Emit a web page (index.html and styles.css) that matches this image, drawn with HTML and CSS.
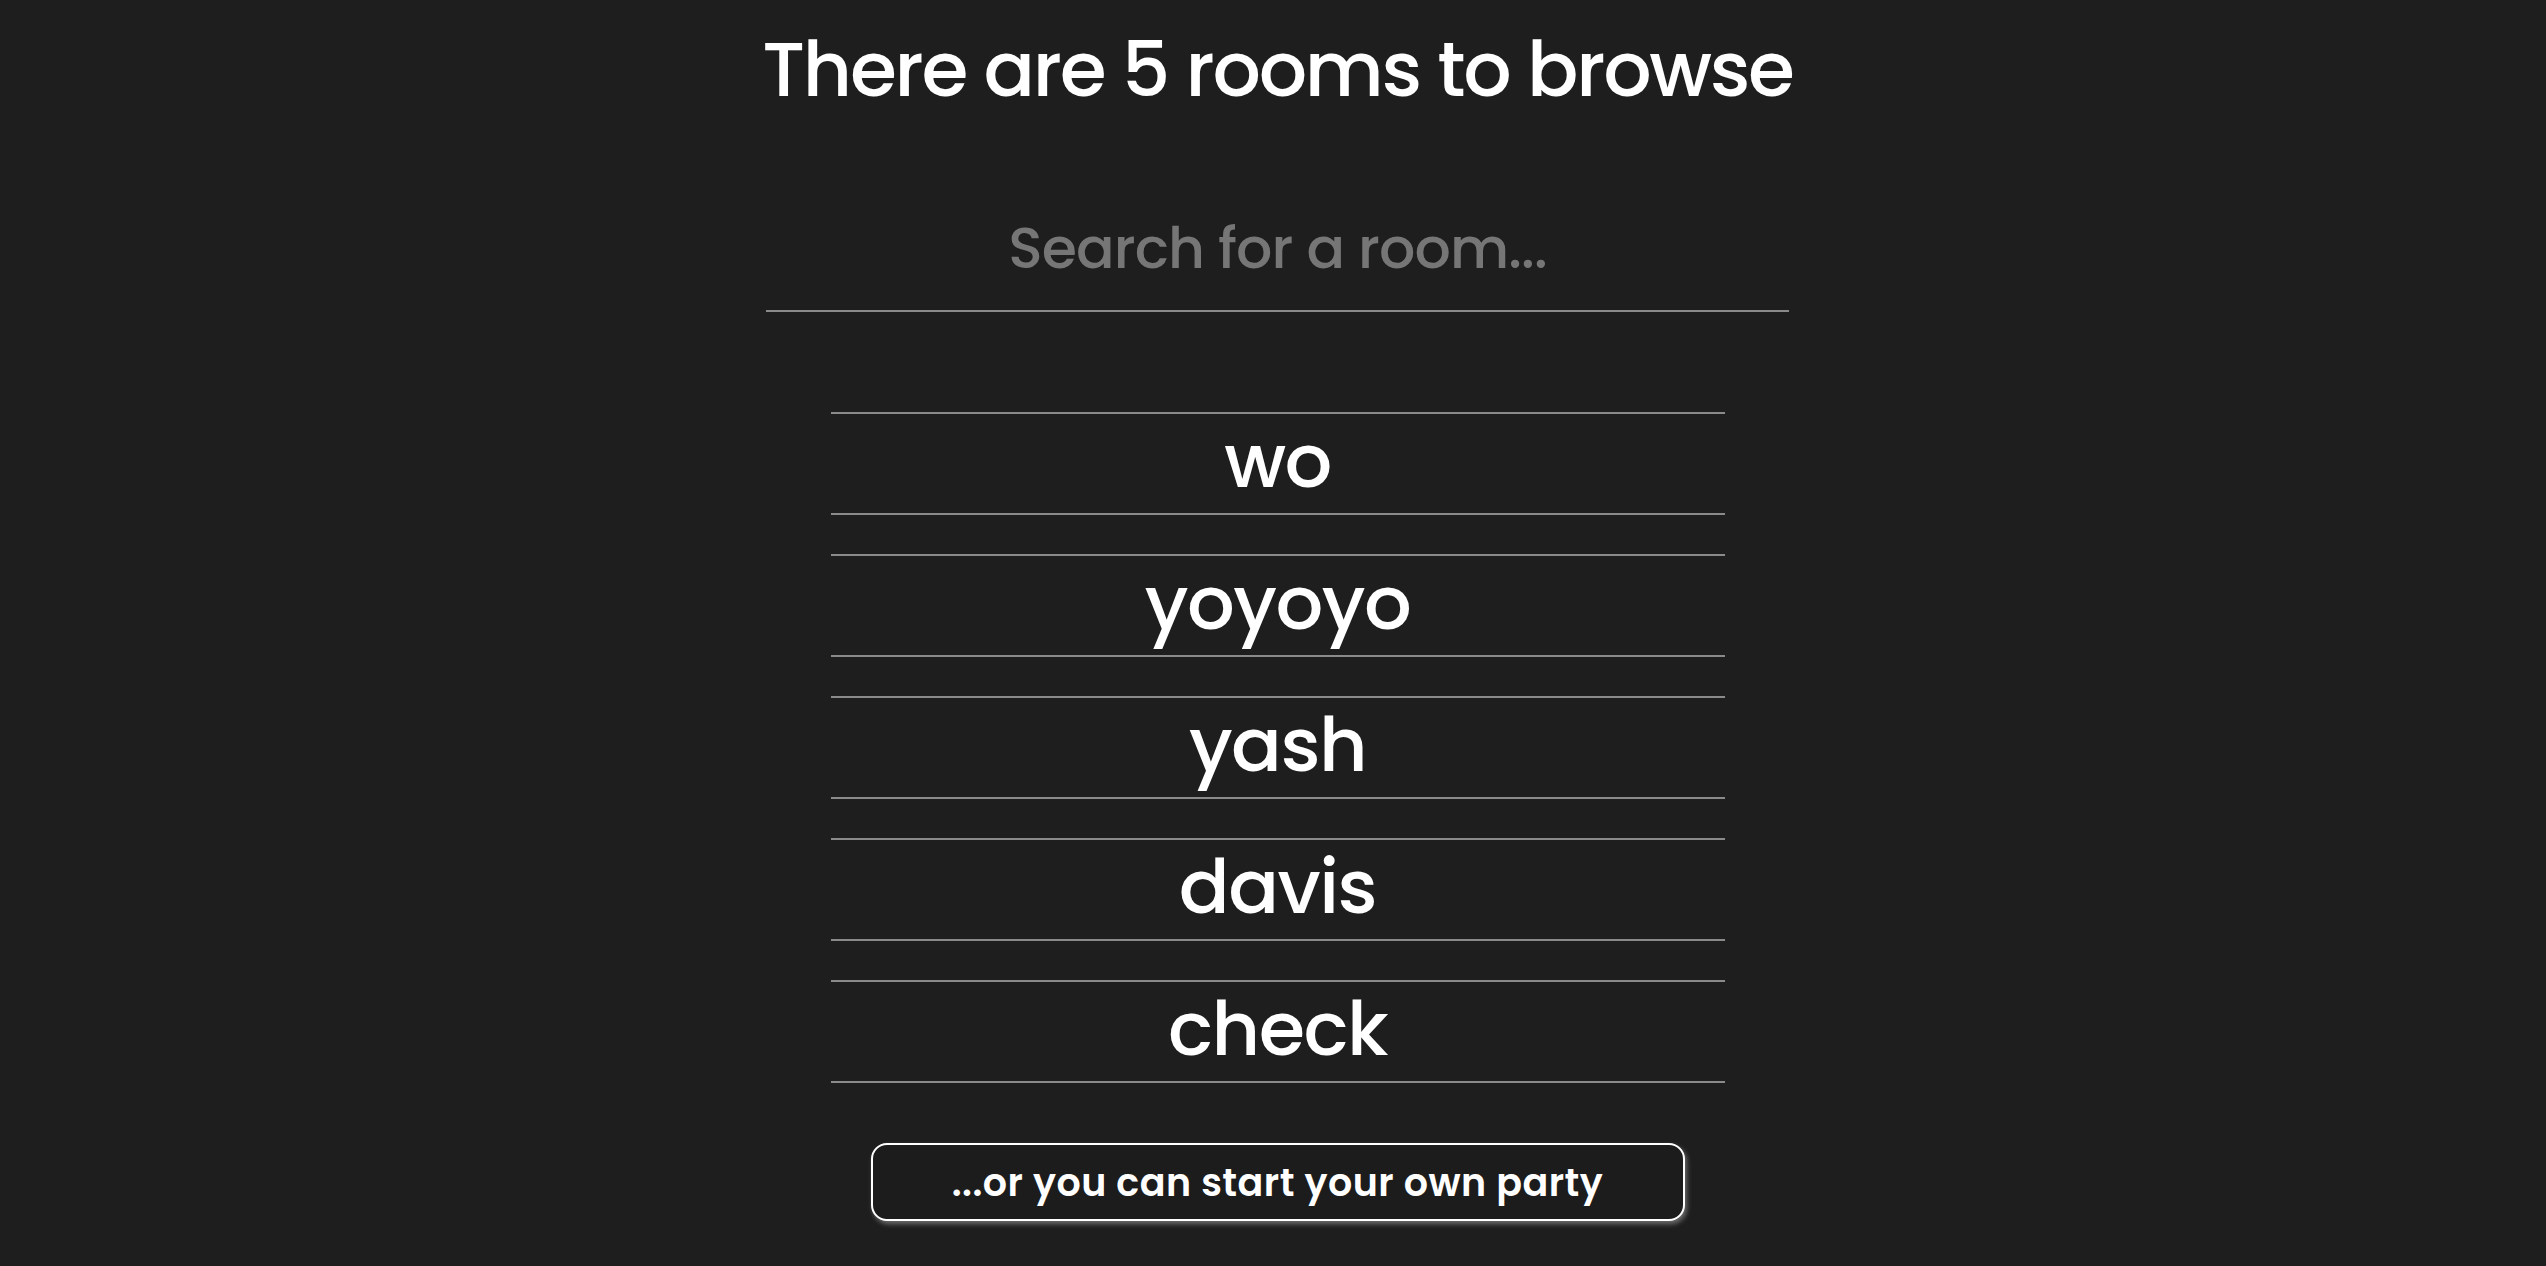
FILE: index.html
```html
<!DOCTYPE html>
<html lang="en">
<head>
<meta charset="utf-8">
<title>Browse rooms</title>
<link rel="stylesheet" href="styles.css">
</head>
<body>
<main class="browse">
  <h1 class="browse-title">There are 5 rooms to browse</h1>
  <input class="search" type="text" placeholder="Search for a room...">
  <ul class="rooms">
    <li class="room">wo</li>
    <li class="room">yoyoyo</li>
    <li class="room">yash</li>
    <li class="room">davis</li>
    <li class="room">check</li>
  </ul>
  <button class="create" type="button">...or you can start your own party</button>
</main>
</body>
</html>
```

FILE: styles.css
```css
html, body {
  margin: 0;
  padding: 0;
  background: #1e1e1e;
}

body {
  font-family: Poppins, Inter, "Noto Sans", sans-serif;
  color: #ffffff;
}

.browse {
  display: flex;
  flex-direction: column;
  align-items: center;
  padding-left: 9px;
  min-height: 1266px;
  box-sizing: border-box;
}

.browse-title {
  margin: 32px 0 0;
  font-size: 76px;
  font-weight: 500;
  line-height: 1;
  letter-spacing: -0.03em;
}

.search {
  margin-top: 92px;
  width: 1023px;
  height: 112px;
  box-sizing: border-box;
  padding: 20px 0 34px;
  border: none;
  border-bottom: 2px solid #8a8a8a;
  background: transparent;
  color: #ffffff;
  font-family: inherit;
  font-size: 57px;
  font-weight: 500;
  line-height: 1;
  letter-spacing: -0.016em;
  text-align: center;
  outline: none;
}

.search::placeholder {
  color: #767676;
}

.rooms {
  list-style: none;
  margin: 100px 0 0;
  padding: 0;
  width: 894px;
  display: flex;
  flex-direction: column;
  gap: 39px;
}

.room {
  box-sizing: border-box;
  height: 103px;
  padding: 9px 0 15px;
  border-top: 2px solid #8a8a8a;
  border-bottom: 2px solid #8a8a8a;
  font-size: 75px;
  font-weight: 500;
  line-height: 1;
  letter-spacing: -0.02em;
  text-align: center;
}

.create {
  margin-top: 60px;
  width: 814px;
  height: 78px;
  box-sizing: border-box;
  border: 2px solid #ffffff;
  border-radius: 16px;
  background: #1c1c1c;
  color: #ffffff;
  font-family: inherit;
  font-size: 38px;
  font-weight: 600;
  letter-spacing: 0.5px;
  box-shadow: 2px 3px 5px rgba(255, 255, 255, 0.35);
  cursor: pointer;
}
```
